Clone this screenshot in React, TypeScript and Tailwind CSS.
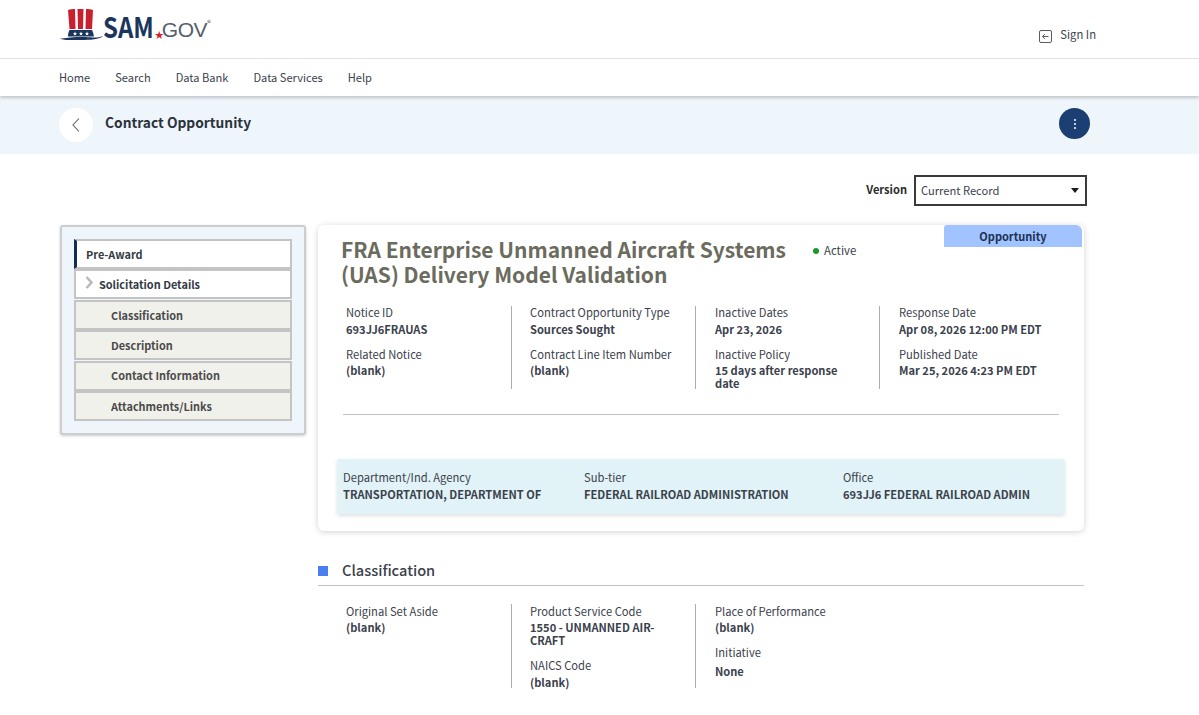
import React from "react";

const font = { fontFamily: '"Noto Sans CJK SC", "Noto Sans", sans-serif' };

function Logo() {
  return (
    <div className="flex items-end h-[42px] mt-[-1px] ml-[1px]">
      <svg width="43" height="32" viewBox="0 0 43 32" className="shrink-0">
        <path d="M8 1 C10 0.2 13 0 15 0 L15.5 20 L9.5 20 Z" fill="#c8202f" />
        <path d="M17.5 0 L23.5 0 L23 20 L18 20 Z" fill="#c8202f" />
        <path d="M26 0 C28 0 31 0.2 33 1 L32 20 L25.5 20 Z" fill="#c8202f" />
        <path d="M9.5 21 L32 21 C33 23 33.5 25 34 27.5 L8 27.5 C8 25 8.5 23 9.5 21 Z" fill="#1b365d" />
        <path d="M15 22.5 l0.6 1.4 1.4 0.1 -1.1 1 0.4 1.5 -1.3 -0.8 -1.3 0.8 0.4 -1.5 -1.1 -1 1.4 -0.1Z" fill="#fff" />
        <path d="M21 22.5 l0.6 1.4 1.4 0.1 -1.1 1 0.4 1.5 -1.3 -0.8 -1.3 0.8 0.4 -1.5 -1.1 -1 1.4 -0.1Z" fill="#fff" />
        <path d="M27 22.5 l0.6 1.4 1.4 0.1 -1.1 1 0.4 1.5 -1.3 -0.8 -1.3 0.8 0.4 -1.5 -1.1 -1 1.4 -0.1Z" fill="#fff" />
        <path d="M0 29.5 C6 29.5 8 28 21 28 C34 28 36 29.5 43 27 C40 30.5 30 31 21 31 C12 31 3 31.5 0 29.5 Z" fill="#1b365d" />
      </svg>
      <span className="text-[24px] leading-[28px] font-bold text-[#1b365d] mb-[-2px] origin-bottom scale-y-[1.2]">SAM</span>
      <span className="text-[#d4202f] text-[9px] leading-[12px] mb-[0px] ml-[1px]">★</span>
      <span className="text-[21px] leading-[26px] text-[#55606b] mb-[-2px] ml-[-2px] tracking-[-0.5px]" style={{ fontFamily: '"Liberation Sans", sans-serif' }}>GOV</span>
      <span className="text-[8px] leading-[8px] text-[#55606b] mb-[14px]">®</span>
    </div>
  );
}

function Field({
  label,
  value,
  box = "",
  gap = "mt-[3px]",
}: {
  label: string;
  value: React.ReactNode;
  box?: string;
  gap?: string;
}) {
  return (
    <div className={box}>
      <div className="text-[11.2px] leading-[16px] text-[#3a414c] whitespace-nowrap">{label}</div>
      <div className={`text-[11.1px] leading-[13px] font-bold text-[#3a414c] whitespace-nowrap ${gap}`}>{value}</div>
    </div>
  );
}

function Col({ children, first, h, pad = "pl-[18px]" }: { children: React.ReactNode; first?: boolean; h: string; pad?: string }) {
  return (
    <div className={`w-[184px] ${pad} ${h} ${first ? "border-l border-transparent" : "border-l border-[#a9aeb1]"}`}>
      {children}
    </div>
  );
}

function SideItem({ label, variant }: { label: string; variant: "top" | "sub" | "child" }) {
  if (variant === "top")
    return (
      <div className="h-[30px] bg-white border-2 border-[#c4c4c4] border-l-[3px] border-l-[#112e51] pl-[9px] flex items-center text-[10.9px] font-bold text-[#323a45]">
        {label}
      </div>
    );
  if (variant === "sub")
    return (
      <div className="h-[30px] bg-white border-2 border-[#c4c4c4] pl-[9px] flex items-center text-[10.9px] font-bold text-[#323a45]">
        <svg width="10" height="14" viewBox="0 0 10 14" className="mr-[4px] mb-[3px] shrink-0">
          <path d="M1.5 1 L6.5 6.5 L1.5 12" fill="none" stroke="#b9b9b9" strokeWidth="2.6" />
        </svg>
        {label}
      </div>
    );
  return (
    <div className="h-[30px] bg-[#f1f1ec] border-2 border-[#c4c4c4] pl-[35px] flex items-center text-[10.9px] font-bold text-[#4a4a4a]">
      {label}
    </div>
  );
}

export default function App() {
  return (
    <div className="w-[1199px] h-[715px] overflow-hidden bg-white text-[#323a45]" style={font}>
      <header className="h-[59px] border-b border-[#e4e4e4] pl-[59px] pr-[103px] flex justify-between">
        <Logo />
        <div className="flex items-center mt-[11px] text-[11.25px] text-[#3a414c]">
          <svg width="13" height="13" viewBox="0 0 13 13" className="mr-[8px] mt-[3px]">
            <rect x="0.5" y="0.5" width="12" height="12" rx="1.5" fill="none" stroke="#5c5c5c" />
            <path d="M9.5 6.5 H3.5 M5.8 4.2 L3.5 6.5 L5.8 8.8" fill="none" stroke="#5c5c5c" />
          </svg>
          Sign In
        </div>
      </header>
      <nav className="relative z-10 h-[37px] pl-[59px] pb-[1px] flex items-center gap-[25px] text-[11.1px] text-[#3a414c] shadow-[0_2px_3px_rgba(0,0,0,0.2)] bg-white">
        <span>Home</span>
        <span>Search</span>
        <span>Data Bank</span>
        <span>Data Services</span>
        <span>Help</span>
      </nav>
      <div className="h-[58px] bg-[#eff6fb] pl-[59px] pr-[109px] pb-[3px] flex items-center justify-between">
        <div className="flex items-center">
          <div className="w-[34px] h-[34px] rounded-full bg-white flex items-center justify-center mr-[12px] mt-[2px]">
            <svg width="10" height="16" viewBox="0 0 10 16">
              <path d="M8 1.5 L2 8 L8 14.5" fill="none" stroke="#5b616b" strokeWidth="1.1" />
            </svg>
          </div>
          <span className="text-[13.75px] font-bold text-[#2b323d] mb-[2px]">Contract Opportunity</span>
        </div>
        <div className="w-[31px] h-[31px] rounded-full bg-[#1b3f73] flex flex-col items-center justify-center gap-[2px]">
          <span className="w-[2px] h-[2px] bg-white rounded-full" />
          <span className="w-[2px] h-[2px] bg-white rounded-full" />
          <span className="w-[2px] h-[2px] bg-white rounded-full" />
        </div>
      </div>
      <div className="flex justify-end items-center pr-[112px] mt-[21px] h-[31px]">
        <span className="text-[11.1px] font-bold text-[#2b2b2b] mr-[7px] mb-[2px]">Version</span>
        <div className="w-[173px] h-[31px] border-2 border-[#3a3a3a] pl-[5px] pr-[6px] flex items-center justify-between text-[11.15px] text-[#3a414c]">
          Current Record
          <span className="w-0 h-0 border-l-[4px] border-r-[4px] border-t-[5px] border-l-transparent border-r-transparent border-t-[#1b1b1b]" />
        </div>
      </div>
      <div className="flex pl-[60px] mt-[19px] items-start">
        <aside className="w-[246px] h-[210px] bg-[#eff6fb] border-2 border-[#cdcdcd] rounded-[3px] shadow-[0_1px_3px_rgba(0,0,0,0.2)] pl-[12px] pr-[12px] pt-[12px] flex flex-col gap-[0.4px]">
          <SideItem label="Pre-Award" variant="top" />
          <SideItem label="Solicitation Details" variant="sub" />
          <SideItem label="Classification" variant="child" />
          <SideItem label="Description" variant="child" />
          <SideItem label="Contact Information" variant="child" />
          <SideItem label="Attachments/Links" variant="child" />
        </aside>
        <main className="ml-[12px] w-[766px]">
          <section className="relative h-[306px] rounded-[6px] bg-white shadow-[0_1px_6px_rgba(0,0,0,0.18)] pl-[23px]">
            <div className="absolute right-[2px] top-0 w-[138px] h-[22px] rounded-tl-[3px] rounded-tr-[6px] bg-[#a1c3ff] text-center text-[11px] leading-[22px] font-bold text-[#1b3153]">
              Opportunity
            </div>
            <div className="flex items-start pt-[12px] h-[81px]">
              <h1 className="w-[472px] text-[21px] leading-[25px] font-bold text-[#6b6b5e]">
                FRA Enterprise Unmanned Aircraft Systems (UAS) Delivery Model Validation
              </h1>
              <div className="flex items-center mt-[5px] text-[11.4px] text-[#3a414c]">
                <span className="w-[6px] h-[6px] rounded-full bg-[#1a9a2c] mr-[5px]" />
                Active
              </div>
            </div>
            <div className="flex ml-[-14px]">
              <Col first h="h-[83px]">
                <Field box="mt-[-2px]" label="Notice ID" value="693JJ6FRAUAS" gap="mt-[3px]" />
                <Field box="mt-[10px]" label="Related Notice" value="(blank)" gap="mt-[2px]" />
              </Col>
              <Col h="h-[83px]">
                <Field box="mt-[-2px]" label="Contract Opportunity Type" value="Sources Sought" gap="mt-[3px]" />
                <Field box="mt-[10px]" label="Contract Line Item Number" value="(blank)" gap="mt-[2px]" />
              </Col>
              <Col h="h-[83px]" pad="pl-[19px]">
                <Field box="mt-[-2px]" label="Inactive Dates" value="Apr 23, 2026" gap="mt-[3px]" />
                <Field
                  box="mt-[10px]"
                  label="Inactive Policy"
                  value={
                    <>
                      15 days after response
                      <br />
                      date
                    </>
                  }
                  gap="mt-[2px]"
                />
              </Col>
              <Col h="h-[83px]" pad="pl-[19px]">
                <Field box="mt-[-2px]" label="Response Date" value="Apr 08, 2026 12:00 PM EDT" gap="mt-[3px]" />
                <Field box="mt-[10px]" label="Published Date" value="Mar 25, 2026 4:23 PM EDT" gap="mt-[2px]" />
              </Col>
            </div>
            <div className="w-[716px] ml-[2px] mt-[25px] border-t border-[#c4c4c4]" />
            <div className="flex w-[728px] h-[55px] ml-[-4px] mt-[44px] bg-[#e1f3f6] rounded-[2px] shadow-[0_2px_4px_rgba(0,0,0,0.12)] pl-[6px] pt-[10px]">
              <div className="w-[241px]">
                <div className="text-[11.2px] leading-[16px] text-[#3a414c]">Department/Ind. Agency</div>
                <div className="text-[11.1px] leading-[13px] font-bold text-[#3a414c] mt-[3px]">TRANSPORTATION, DEPARTMENT OF</div>
              </div>
              <div className="w-[259px]">
                <div className="text-[11.2px] leading-[16px] text-[#3a414c]">Sub-tier</div>
                <div className="text-[11.1px] leading-[13px] font-bold text-[#3a414c] mt-[3px]">FEDERAL RAILROAD ADMINISTRATION</div>
              </div>
              <div>
                <div className="text-[11.2px] leading-[16px] text-[#3a414c]">Office</div>
                <div className="text-[11.1px] leading-[13px] font-bold text-[#3a414c] mt-[3px]">693JJ6 FEDERAL RAILROAD ADMIN</div>
              </div>
            </div>
          </section>
          <section className="mt-[28px]">
            <div className="flex items-center h-[27px] border-b border-[#c4c4c4]">
              <span className="w-[10px] h-[10px] bg-[#4a7ff0] mr-[14px] mb-[3px]" />
              <h2 className="text-[14.6px] font-medium text-[#3a414c] mb-[4px]">Classification</h2>
            </div>
            <div className="flex ml-[9px] mt-[18px]">
              <Col first h="h-[84px]">
                <Field box="mt-[-1px]" label="Original Set Aside" value="(blank)" gap="mt-[2px]" />
              </Col>
              <Col h="h-[84px]">
                <Field
                  box="mt-[-1px]"
                  label="Product Service Code"
                  value={
                    <>
                      1550 - UNMANNED AIR-
                      <br />
                      CRAFT
                    </>
                  }
                  gap="mt-[2px]"
                />
                <Field box="mt-[10px]" label="NAICS Code" value="(blank)" gap="mt-[3px]" />
              </Col>
              <Col h="h-[84px]" pad="pl-[19px]">
                <Field box="mt-[-1px]" label="Place of Performance" value="(blank)" gap="mt-[2px]" />
                <Field box="mt-[10px]" label="Initiative" value="None" gap="mt-[5px]" />
              </Col>
            </div>
          </section>
        </main>
      </div>
    </div>
  );
}
